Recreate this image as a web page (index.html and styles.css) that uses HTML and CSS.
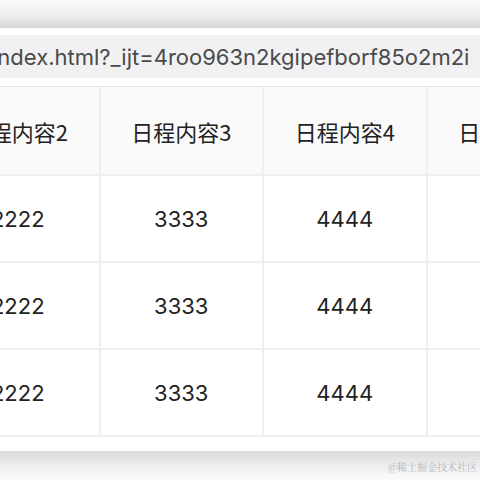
FILE: index.html
```html
<!DOCTYPE html>
<html lang="zh">
<head>
<meta charset="utf-8">
<link rel="stylesheet" href="styles.css">
</head>
<body>
<div class="frame-top"></div>
<div class="address">
  <span class="url">index.html?_ijt=4roo963n2kgipefborf85o2m2i</span>
</div>
<div class="viewport">
  <div class="schedule">
    <div class="cell head">日程内容2</div><div class="cell head">日程内容3</div><div class="cell head">日程内容4</div><div class="cell head">日程内容5</div>
    <div class="cell">2222</div><div class="cell">3333</div><div class="cell">4444</div><div class="cell">5555</div>
    <div class="cell">2222</div><div class="cell">3333</div><div class="cell">4444</div><div class="cell">5555</div>
    <div class="cell">2222</div><div class="cell">3333</div><div class="cell">4444</div><div class="cell">5555</div>
  </div>
</div>
<div class="frame-bottom">
  <span class="watermark">@稀土掘金技术社区</span>
</div>
</body>
</html>
```
FILE: styles.css
```css
html, body {
  margin: 0;
  padding: 0;
  background: #fff;
  width: 480px;
  height: 480px;
  overflow: hidden;
  font-family: "Inter", "Noto Sans CJK SC", sans-serif;
}
.frame-top {
  height: 28px;
  background: linear-gradient(to bottom, #fbfbfb 0%, #ececec 60%, #d6d6d6 100%);
}
.address {
  margin-top: 7px;
  height: 43px;
  background: #f1f1f3;
  display: flex;
  align-items: center;
  overflow: hidden;
  white-space: nowrap;
}
.url {
  margin-left: -8px;
  font-size: 22px;
  color: #4a4a4a;
}
.viewport {
  margin-top: 8px;
  height: 365px;
  overflow: hidden;
  border-top: 1px solid #e2e1e8;
  box-sizing: border-box;
}
.schedule {
  display: grid;
  grid-template-columns: repeat(4, 163.5px);
  grid-template-rows: 89px repeat(3, 87px);
  margin-left: -63px;
  width: 654px;
}
.cell {
  display: flex;
  align-items: center;
  justify-content: center;
  color: #222;
  font-size: 22px;
  border-right: 2px solid #efefef;
  border-bottom: 2px solid #efefef;
  box-sizing: border-box;
  white-space: nowrap;
}
.head {
  background: #fafafa;
  font-family: "Noto Sans CJK SC", sans-serif;
}
.frame-bottom {
  height: 29px;
  background: linear-gradient(to bottom, #d9d9d9 0%, #ececec 45%, #fbfbfb 100%);
  display: flex;
  justify-content: flex-end;
  align-items: flex-end;
  padding-right: 3px;
  box-sizing: border-box;
}
.watermark {
  font-size: 10px;
  color: #b4b4b4;
  margin-bottom: 6px;
  font-family: "Noto Serif CJK SC", "Noto Sans CJK SC", serif;
}
```
